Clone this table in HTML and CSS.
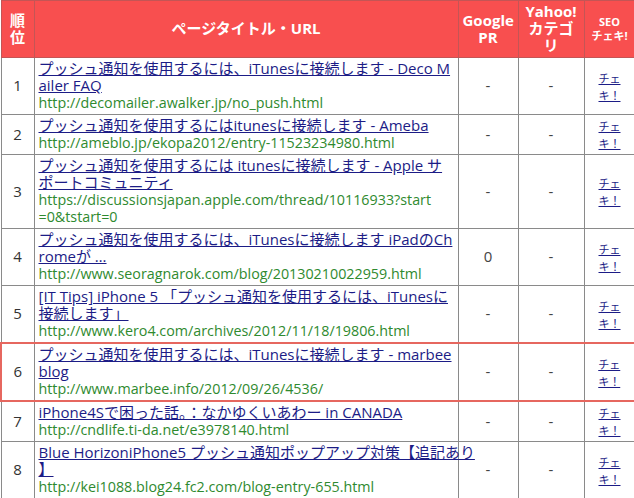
FILE: index.html
```html
<!DOCTYPE html>
<html lang="ja">
<head>
<meta charset="utf-8">
<title>SEO ランキング</title>
<link rel="stylesheet" href="styles.css">
</head>
<body>
<table class="rank">
  <colgroup>
    <col class="c-rank">
    <col class="c-title">
    <col class="c-pr">
    <col class="c-yh">
    <col class="c-seo">
  </colgroup>
  <thead>
    <tr>
      <th>順位</th>
      <th>ページタイトル・URL</th>
      <th>Google PR</th>
      <th>Yahoo! カテゴリ</th>
      <th class="seo">SEO<br>チェキ!</th>
    </tr>
  </thead>
  <tbody>
    <tr>
      <td class="num">1</td>
      <td class="title"><a href="#">プッシュ通知を使用するには、iTunesに接続します - Deco M<br>ailer FAQ</a><div class="url">http://decomailer.awalker.jp/no_push.html</div></td>
      <td class="val">-</td>
      <td class="val">-</td>
      <td class="check"><a href="#">チェキ！</a></td>
    </tr>
    <tr>
      <td class="num">2</td>
      <td class="title"><a href="#">プッシュ通知を使用するにはitunesに接続します - Ameba</a><div class="url">http://ameblo.jp/ekopa2012/entry-11523234980.html</div></td>
      <td class="val">-</td>
      <td class="val">-</td>
      <td class="check"><a href="#">チェキ！</a></td>
    </tr>
    <tr>
      <td class="num">3</td>
      <td class="title"><a href="#">プッシュ通知を使用するには itunesに接続します - Apple サ<br>ポートコミュニティ</a><div class="url">https://discussionsjapan.apple.com/thread/10116933?start<br>=0&amp;tstart=0</div></td>
      <td class="val">-</td>
      <td class="val">-</td>
      <td class="check"><a href="#">チェキ！</a></td>
    </tr>
    <tr>
      <td class="num">4</td>
      <td class="title"><a href="#">プッシュ通知を使用するには、iTunesに接続します iPadのCh<br>romeが …</a><div class="url">http://www.seoragnarok.com/blog/20130210022959.html</div></td>
      <td class="val">0</td>
      <td class="val">-</td>
      <td class="check"><a href="#">チェキ！</a></td>
    </tr>
    <tr>
      <td class="num">5</td>
      <td class="title"><a href="#">[IT Tips] iPhone 5 「プッシュ通知を使用するには、iTunesに<br>接続します」</a><div class="url">http://www.kero4.com/archives/2012/11/18/19806.html</div></td>
      <td class="val">-</td>
      <td class="val">-</td>
      <td class="check"><a href="#">チェキ！</a></td>
    </tr>
    <tr class="hl">
      <td class="num">6</td>
      <td class="title"><a href="#">プッシュ通知を使用するには、iTunesに接続します - marbee<br>blog</a><div class="url">http://www.marbee.info/2012/09/26/4536/</div></td>
      <td class="val">-</td>
      <td class="val">-</td>
      <td class="check"><a href="#">チェキ！</a></td>
    </tr>
    <tr>
      <td class="num">7</td>
      <td class="title"><a href="#">iPhone4Sで困った話。：なかゆくいあわー in CANADA</a><div class="url">http://cndlife.ti-da.net/e3978140.html</div></td>
      <td class="val">-</td>
      <td class="val">-</td>
      <td class="check"><a href="#">チェキ！</a></td>
    </tr>
    <tr>
      <td class="num">8</td>
      <td class="title"><a href="#">Blue HorizoniPhone5 プッシュ通知ポップアップ対策【追記あり<br>】</a><div class="url">http://kei1088.blog24.fc2.com/blog-entry-655.html</div></td>
      <td class="val">-</td>
      <td class="val">-</td>
      <td class="check"><a href="#">チェキ！</a></td>
    </tr>
  </tbody>
</table>
</body>
</html>
```

FILE: styles.css
```css
html, body {
  margin: 0;
  padding: 0;
  background: #ffffff;
}

body {
  font-family: "Open Sans", "Noto Sans CJK JP", sans-serif;
  color: #333333;
}

.rank {
  width: 634px;
  border-collapse: collapse;
  table-layout: fixed;
}

.c-rank { width: 33px; }
.c-title { width: 424px; }
.c-pr { width: 60px; }
.c-yh { width: 66px; }
.c-seo { width: 51px; }

.rank th {
  background: #f84f4f;
  color: #ffffff;
  font-weight: bold;
  font-size: 15px;
  line-height: 17px;
  padding: 2px 4px 3px;
  border: 1px solid #c45555;
  text-align: center;
  vertical-align: middle;
}

.rank th.seo {
  font-size: 11px;
  line-height: 14px;
}

.rank td {
  border: 1px solid #8a8a8a;
  padding: 2px 4px 3px;
  font-size: 15px;
  line-height: 17px;
  vertical-align: middle;
}

.num {
  text-align: center;
  color: #333333;
}

.val {
  text-align: center;
  color: #444444;
}

.title {
  white-space: nowrap;
}

.title a {
  color: #1c1c86;
  text-decoration: underline;
}

.url {
  color: #2f8a2f;
  font-size: 14.3px;
}

.check {
  text-align: center;
  line-break: strict;
}

.check a {
  font-size: 11px;
  line-height: 13px;
  color: #1c1c86;
}

.rank tr.hl td {
  border-top: 2px solid #e6675f;
  border-bottom: 2px solid #e6675f;
}

.rank tr.hl td:first-child {
  border-left: 2px solid #e6675f;
}

.rank tr.hl td:last-child {
  border-right: 2px solid #e6675f;
}
```
